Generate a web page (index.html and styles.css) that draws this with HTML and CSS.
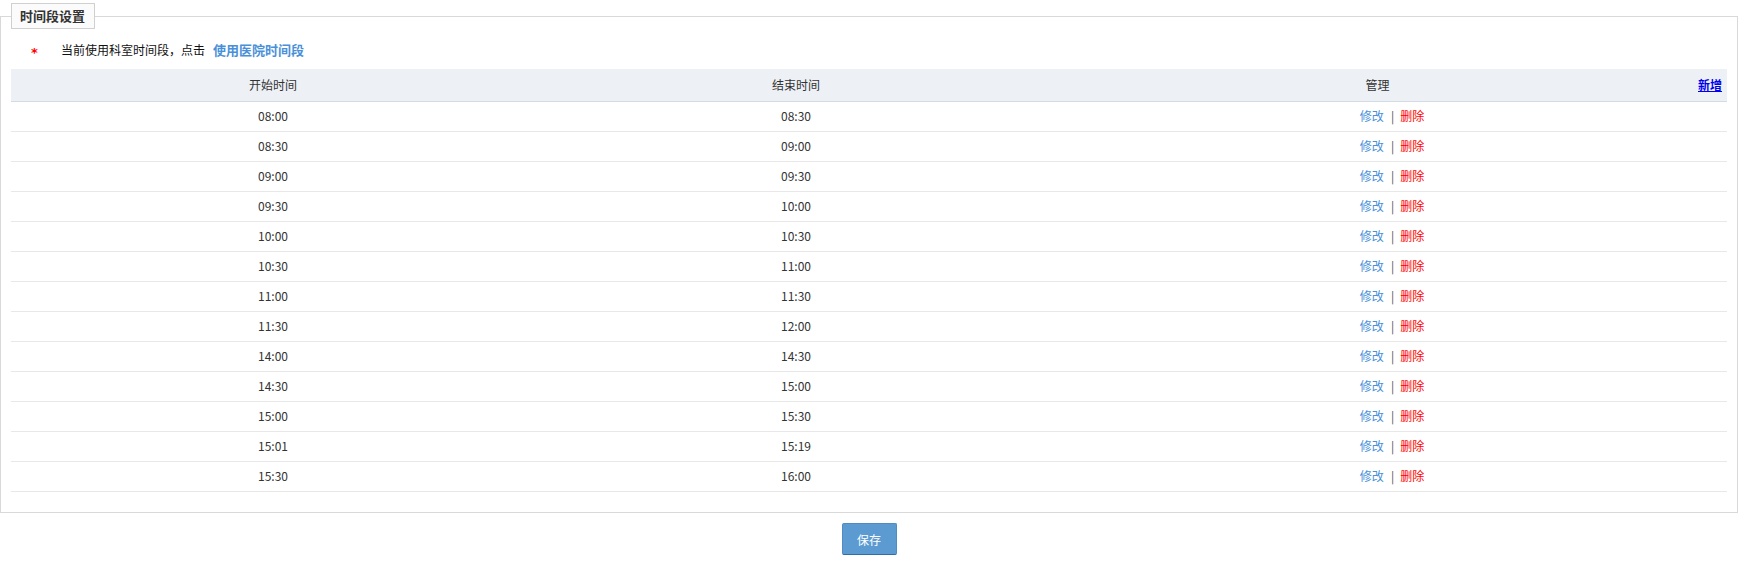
FILE: index.html
```html
<!DOCTYPE html>
<html lang="zh-CN">
<head>
<meta charset="utf-8">
<title>时间段设置</title>
<link rel="stylesheet" href="styles.css">
</head>
<body>
<div class="page">
  <fieldset class="panel">
    <legend class="panel-title">时间段设置</legend>
    <div class="notice">
      <span class="req">*</span><span class="notice-text">当前使用科室时间段，点击</span><a class="notice-link" href="#">使用医院时间段</a>
    </div>
    <table class="grid">
      <thead>
        <tr>
          <th class="col-start">开始时间</th>
          <th class="col-end">结束时间</th>
          <th class="col-manage"><a class="add-link" href="#">新增</a>管理</th>
        </tr>
      </thead>
      <tbody>
        <tr><td>08:00</td><td>08:30</td><td><a class="edit" href="#">修改</a><span class="sep">|</span><a class="del" href="#">删除</a></td></tr>
        <tr><td>08:30</td><td>09:00</td><td><a class="edit" href="#">修改</a><span class="sep">|</span><a class="del" href="#">删除</a></td></tr>
        <tr><td>09:00</td><td>09:30</td><td><a class="edit" href="#">修改</a><span class="sep">|</span><a class="del" href="#">删除</a></td></tr>
        <tr><td>09:30</td><td>10:00</td><td><a class="edit" href="#">修改</a><span class="sep">|</span><a class="del" href="#">删除</a></td></tr>
        <tr><td>10:00</td><td>10:30</td><td><a class="edit" href="#">修改</a><span class="sep">|</span><a class="del" href="#">删除</a></td></tr>
        <tr><td>10:30</td><td>11:00</td><td><a class="edit" href="#">修改</a><span class="sep">|</span><a class="del" href="#">删除</a></td></tr>
        <tr><td>11:00</td><td>11:30</td><td><a class="edit" href="#">修改</a><span class="sep">|</span><a class="del" href="#">删除</a></td></tr>
        <tr><td>11:30</td><td>12:00</td><td><a class="edit" href="#">修改</a><span class="sep">|</span><a class="del" href="#">删除</a></td></tr>
        <tr><td>14:00</td><td>14:30</td><td><a class="edit" href="#">修改</a><span class="sep">|</span><a class="del" href="#">删除</a></td></tr>
        <tr><td>14:30</td><td>15:00</td><td><a class="edit" href="#">修改</a><span class="sep">|</span><a class="del" href="#">删除</a></td></tr>
        <tr><td>15:00</td><td>15:30</td><td><a class="edit" href="#">修改</a><span class="sep">|</span><a class="del" href="#">删除</a></td></tr>
        <tr><td>15:01</td><td>15:19</td><td><a class="edit" href="#">修改</a><span class="sep">|</span><a class="del" href="#">删除</a></td></tr>
        <tr><td>15:30</td><td>16:00</td><td><a class="edit" href="#">修改</a><span class="sep">|</span><a class="del" href="#">删除</a></td></tr>
      </tbody>
    </table>
  </fieldset>
  <div class="actions">
    <button class="btn-save" type="button">保存</button>
  </div>
</div>
</body>
</html>
```

FILE: styles.css
```css
html, body {
  margin: 0;
  padding: 0;
  background: #ffffff;
}

body {
  font-family: "Noto Sans CJK SC", "Liberation Sans", sans-serif;
  font-size: 12px;
  color: #333333;
}

.page {
  width: 1738px;
  padding-top: 3px;
}

.panel {
  margin: 0;
  padding: 0 10px 20px 10px;
  border: 1px solid #d9d9d9;
  min-inline-size: 0;
}

.panel-title {
  margin: 0;
  padding: 0 9px 0 8px;
  height: 24px;
  line-height: 24px;
  border: 1px solid #d0d0d0;
  background: #fbfbfb;
  font-size: 13px;
  font-weight: bold;
  color: #333333;
}

.notice {
  display: flex;
  align-items: center;
  padding: 11px 0 9px 20px;
  height: 20px;
  line-height: 20px;
  color: #111111;
}

.req {
  width: 30px;
  height: 20px;
  padding-top: 3px;
  box-sizing: border-box;
  line-height: 20px;
  color: #ff0000;
  font-family: "DejaVu Sans", sans-serif;
  font-size: 13px;
  font-weight: bold;
}

.notice-text {
  font-size: 12px;
}

.notice-link {
  margin-left: 8px;
  font-size: 13px;
  font-weight: bold;
  color: #4a90d9;
  text-decoration: none;
}

.grid {
  width: 100%;
  border-collapse: separate;
  border-spacing: 0;
  table-layout: fixed;
}

.grid th {
  height: 32px;
  padding: 0;
  line-height: 32px;
  background: #edf1f5;
  border-bottom: 1px solid #d3dbe4;
  font-weight: normal;
  font-size: 12px;
  color: #333333;
  text-align: center;
}

.col-start { width: 524px; }
.col-end { width: 522px; }

.add-link {
  float: right;
  margin-right: 5px;
  color: #0000ee;
  text-decoration: underline;
  font-weight: bold;
}

.grid td {
  height: 28px;
  padding: 0 0 1px 0;
  line-height: 28px;
  border-bottom: 1px solid #e8e8e8;
  text-align: center;
  font-size: 12px;
  color: #333333;
}

.edit {
  color: #4a90d9;
  text-decoration: none;
}

.sep {
  margin: 0 6px 0 7px;
  color: #555555;
}

.del {
  color: #ff0000;
  text-decoration: none;
}

.actions {
  display: flex;
  justify-content: center;
  padding-top: 10px;
}

.btn-save {
  width: 55px;
  height: 32px;
  padding: 0;
  border: 1px solid #4f8cc2;
  border-bottom-color: #2f6ea6;
  border-radius: 2px;
  background: #5b9bd1;
  color: #ffffff;
  font-family: "Noto Sans CJK SC", "Liberation Sans", sans-serif;
  font-size: 12px;
}
```
